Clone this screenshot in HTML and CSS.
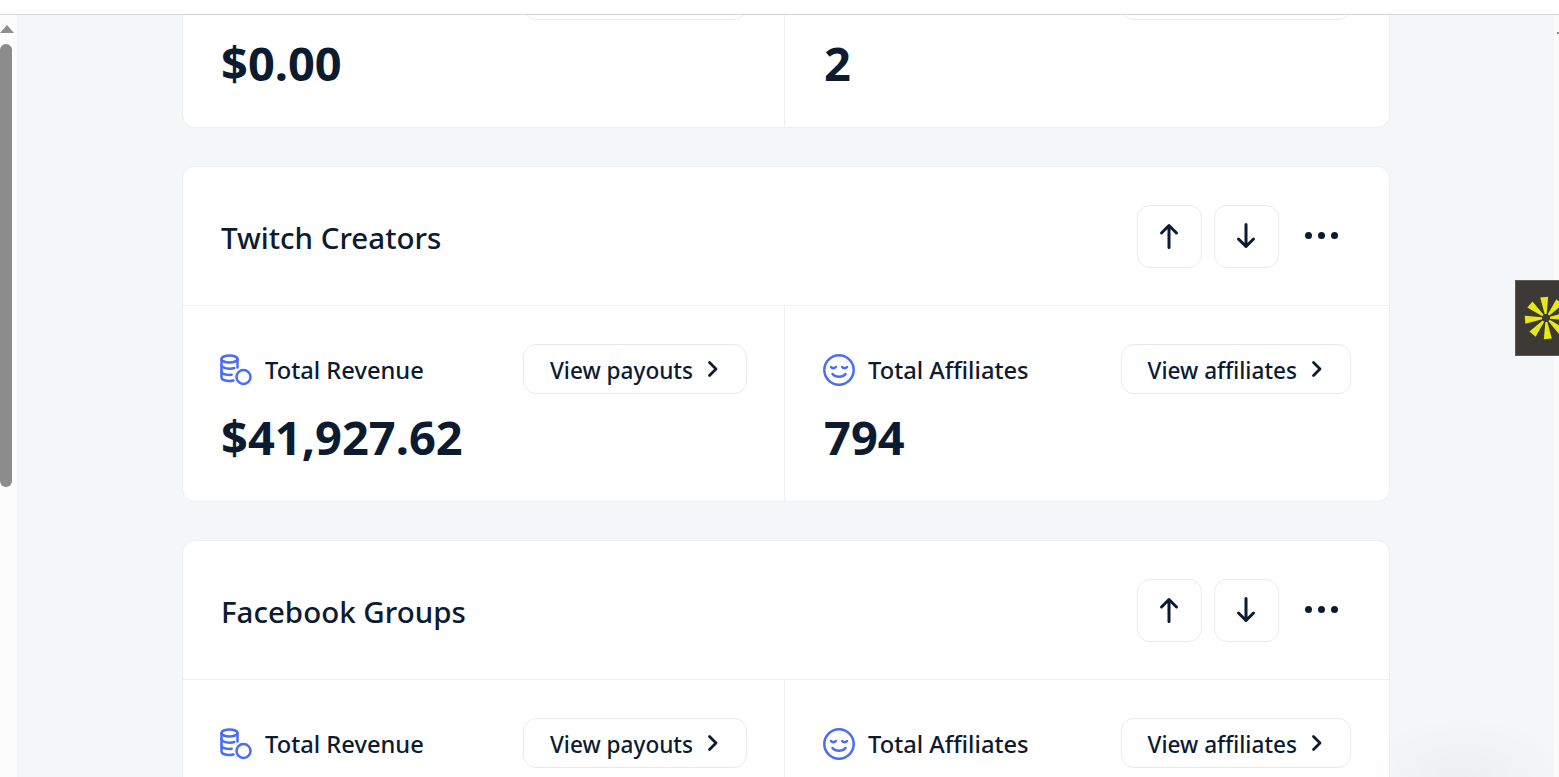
FILE: index.html
```html
<!DOCTYPE html>
<html lang="en">
<head>
<meta charset="utf-8">
<title>Affiliate programs</title>
<link rel="stylesheet" href="styles.css">
</head>
<body>
<svg class="defs" width="0" height="0" aria-hidden="true">
  <defs>
    <symbol id="i-coins" viewBox="0 0 32 32">
      <g fill="none" stroke="currentColor" stroke-width="2.500" stroke-linecap="round" stroke-linejoin="round">
        <path d="M1.500 5C1.500 3 5 1.500 9.500 1.500S17.500 3 17.500 5 14 8.500 9.500 8.500 1.500 7 1.500 5Z"/>
        <path d="M1.500 5v18.500C1.500 25.500 5 27 9.500 27c1.500 0 2.800-.1 4-.5"/>
        <path d="M17.500 5v8.500"/>
        <path d="M1.500 11.200c0 2 3.500 3.500 8 3.500 1.800 0 3.500-.2 4.800-.7"/>
        <path d="M1.500 17.500c0 2 3.500 3.400 8 3.400 .8 0 1.500 0 2.200-.1"/>
        <circle cx="23.500" cy="23" r="7"/>
      </g>
    </symbol>
    <symbol id="i-smile" viewBox="0 0 32 32">
      <g fill="none" stroke="currentColor" stroke-width="2.500" stroke-linecap="round" stroke-linejoin="round">
        <circle cx="16" cy="16" r="14.700"/>
        <path d="M8 13c1 1.500 3.500 1.500 4.800 0"/>
        <path d="M19.200 13c1 1.500 3.500 1.500 4.800 0"/>
        <path d="M9.500 20c3 3.800 10 3.800 13 0"/>
      </g>
    </symbol>
    <symbol id="i-up" viewBox="0 0 30 30">
      <path d="M15 26.500V4.500M7.500 12 15 4.500 22.500 12" fill="none" stroke="currentColor" stroke-width="3" stroke-linecap="round" stroke-linejoin="round"/>
    </symbol>
    <symbol id="i-down" viewBox="0 0 30 30">
      <path d="M15 3.500V25.500M7.500 18 15 25.500 22.500 18" fill="none" stroke="currentColor" stroke-width="3" stroke-linecap="round" stroke-linejoin="round"/>
    </symbol>
    <symbol id="i-chevron" viewBox="0 0 12 18">
      <path d="M2.500 2.500 9 9l-6.500 6.500" fill="none" stroke="currentColor" stroke-width="2.800" stroke-linecap="round" stroke-linejoin="round"/>
    </symbol>
  </defs>
</svg>

<div class="app">
  <div class="topbar"></div>
  <div class="frame">
    <div class="scrollbar">
      <span class="scroll-arrow"></span>
      <span class="scroll-thumb"></span>
    </div>
    <main class="content">
      <div class="cards">

        <section class="card">
          <header class="card-head">
            <h2 class="card-title">YouTube Creators</h2>
            <div class="card-actions">
              <button class="icon-btn"><svg class="arrow"><use href="#i-up"/></svg></button>
              <button class="icon-btn"><svg class="arrow"><use href="#i-down"/></svg></button>
              <span class="dots"><i></i><i></i><i></i></span>
            </div>
          </header>
          <div class="stats">
            <div class="stat">
              <div class="stat-top">
                <span class="stat-label"><svg class="stat-icon"><use href="#i-coins"/></svg>Total Revenue</span>
                <button class="link-btn">View payouts<svg class="chev"><use href="#i-chevron"/></svg></button>
              </div>
              <div class="stat-value">$0.00</div>
            </div>
            <div class="stat">
              <div class="stat-top">
                <span class="stat-label"><svg class="stat-icon"><use href="#i-smile"/></svg>Total Affiliates</span>
                <button class="link-btn">View affiliates<svg class="chev"><use href="#i-chevron"/></svg></button>
              </div>
              <div class="stat-value">2</div>
            </div>
          </div>
        </section>

        <section class="card">
          <header class="card-head">
            <h2 class="card-title">Twitch Creators</h2>
            <div class="card-actions">
              <button class="icon-btn"><svg class="arrow"><use href="#i-up"/></svg></button>
              <button class="icon-btn"><svg class="arrow"><use href="#i-down"/></svg></button>
              <span class="dots"><i></i><i></i><i></i></span>
            </div>
          </header>
          <div class="stats">
            <div class="stat">
              <div class="stat-top">
                <span class="stat-label"><svg class="stat-icon"><use href="#i-coins"/></svg>Total Revenue</span>
                <button class="link-btn">View payouts<svg class="chev"><use href="#i-chevron"/></svg></button>
              </div>
              <div class="stat-value">$41,927.62</div>
            </div>
            <div class="stat">
              <div class="stat-top">
                <span class="stat-label"><svg class="stat-icon"><use href="#i-smile"/></svg>Total Affiliates</span>
                <button class="link-btn">View affiliates<svg class="chev"><use href="#i-chevron"/></svg></button>
              </div>
              <div class="stat-value">794</div>
            </div>
          </div>
        </section>

        <section class="card">
          <header class="card-head">
            <h2 class="card-title">Facebook Groups</h2>
            <div class="card-actions">
              <button class="icon-btn"><svg class="arrow"><use href="#i-up"/></svg></button>
              <button class="icon-btn"><svg class="arrow"><use href="#i-down"/></svg></button>
              <span class="dots"><i></i><i></i><i></i></span>
            </div>
          </header>
          <div class="stats">
            <div class="stat">
              <div class="stat-top">
                <span class="stat-label"><svg class="stat-icon"><use href="#i-coins"/></svg>Total Revenue</span>
                <button class="link-btn">View payouts<svg class="chev"><use href="#i-chevron"/></svg></button>
              </div>
            </div>
            <div class="stat">
              <div class="stat-top">
                <span class="stat-label"><svg class="stat-icon"><use href="#i-smile"/></svg>Total Affiliates</span>
                <button class="link-btn">View affiliates<svg class="chev"><use href="#i-chevron"/></svg></button>
              </div>
            </div>
          </div>
        </section>

      </div>
      <div class="corner-glow"></div>
    </main>
    <div class="edge"><span class="edge-dot"></span></div>
  </div>
  <aside class="feedback-tab">
    <svg class="burst" viewBox="-22 -22 44 44" aria-hidden="true">
      <g fill="#e6ea12" transform="rotate(-5)">
        <polygon id="spoke" points="-1,-4 1,-4 4,-21 -4,-21"/>
        <use href="#spoke" transform="rotate(45)"/>
        <use href="#spoke" transform="rotate(90)"/>
        <use href="#spoke" transform="rotate(135)"/>
        <use href="#spoke" transform="rotate(180)"/>
        <use href="#spoke" transform="rotate(225)"/>
        <use href="#spoke" transform="rotate(270)"/>
        <use href="#spoke" transform="rotate(315)"/>
      </g>
    </svg>
  </aside>
</div>
</body>
</html>
```

FILE: styles.css
```css
* { box-sizing: border-box; }

html, body {
  margin: 0;
  height: 100%;
  overflow: hidden;
}

body {
  font-family: "Noto Sans", "Open Sans", sans-serif;
  color: #0d1b31;
  background: #fff;
}

.defs { position: absolute; }

.app {
  position: relative;
  height: 777px;
  display: flex;
  flex-direction: column;
  overflow: hidden;
}

.topbar {
  flex: 0 0 15px;
  background: #fff;
  border-bottom: 1px solid #d6d6d6;
}

.frame {
  flex: 1;
  min-height: 0;
  display: flex;
}

.scrollbar {
  flex: 0 0 17px;
  background: #fcfcfc;
  padding-top: 10px;
  display: flex;
  flex-direction: column;
}

.scroll-arrow {
  width: 0;
  height: 0;
  border-left: 7px solid transparent;
  border-right: 7px solid transparent;
  border-bottom: 8px solid #8e8e8e;
}

.scroll-thumb {
  width: 12px;
  height: 443px;
  margin-top: 11px;
  background: #8c8c8c;
  border-radius: 6px;
}

.content {
  position: relative;
  flex: 1;
  min-width: 0;
  background: #f5f6f8;
  overflow: hidden;
}

.edge {
  flex: 0 0 5px;
  background: #fbfbfb;
  position: relative;
}

.edge-dot {
  position: absolute;
  right: 0;
  top: 17px;
  width: 2px;
  height: 2px;
  background: #8a8a8a;
}

.cards {
  width: 1208px;
  margin: -223px 0 0 165px;
  display: flex;
  flex-direction: column;
  gap: 38px;
}

.card {
  background: #fff;
  border: 1px solid #edeff3;
  border-radius: 13px;
}

.card-head {
  height: 139px;
  padding: 0 38px;
  display: flex;
  align-items: center;
  justify-content: space-between;
  border-bottom: 1px solid #edeff3;
}

.card-title {
  margin: 4px 0 0;
  font-size: 29.500px;
  font-weight: 500;
  line-height: 40px;
}

.card-actions {
  display: flex;
  align-items: center;
  gap: 12px;
  margin-right: 13px;
}

.icon-btn {
  width: 65px;
  height: 63px;
  padding: 0;
  margin-top: 1px;
  display: flex;
  align-items: center;
  justify-content: center;
  background: #fff;
  border: 1px solid #e7eaef;
  border-radius: 13px;
  color: #0d1b31;
}

.arrow {
  width: 30px;
  height: 30px;
  margin: -2px 1px 0 0;
}

.dots {
  display: flex;
  gap: 6px;
  margin-left: 14px;
  margin-top: -2px;
}

.dots i {
  width: 7px;
  height: 7px;
  border-radius: 50%;
  background: #0d1b31;
}

.stats {
  display: grid;
  grid-template-columns: 601px 1fr;
}

.stat {
  height: 195px;
  padding: 38px 37px 0 38px;
}

.stat + .stat {
  border-left: 1px solid #edeff3;
  padding: 38px 38px 0 39px;
}

.stat-top {
  display: flex;
  align-items: flex-start;
  justify-content: space-between;
}

.stat-label {
  display: flex;
  align-items: center;
  gap: 12px;
  font-size: 23.700px;
  font-weight: 500;
  line-height: 52px;
}

.stat-icon {
  width: 32px;
  height: 32px;
  margin-left: -1px;
  margin-right: 1px;
  color: #4a6cf7;
}

.link-btn {
  height: 50px;
  padding: 3px 27px 0 26px;
  display: flex;
  align-items: center;
  gap: 14px;
  background: #fff;
  border: 1px solid #e7eaef;
  border-radius: 13px;
  font: 500 22.600px "Noto Sans", "Open Sans", sans-serif;
  color: #0d1b31;
}

.chev {
  width: 12px;
  height: 18px;
  margin-top: -3px;
}

.stat-value {
  margin-top: 9px;
  font-size: 47px;
  font-weight: 700;
  line-height: 64px;
}

.corner-glow {
  position: absolute;
  right: -20px;
  bottom: -60px;
  width: 220px;
  height: 120px;
  border-radius: 50%;
  background: radial-gradient(closest-side, rgba(0, 0, 0, .03), rgba(0, 0, 0, 0));
}

.feedback-tab {
  position: absolute;
  right: 0;
  top: 280px;
  width: 44px;
  height: 76px;
  background: #3d3a35;
  border: 1px solid #5c5a55;
  border-right: 0;
  overflow: hidden;
}

.burst {
  position: absolute;
  left: 8px;
  top: 15px;
  width: 44px;
  height: 44px;
}
```
